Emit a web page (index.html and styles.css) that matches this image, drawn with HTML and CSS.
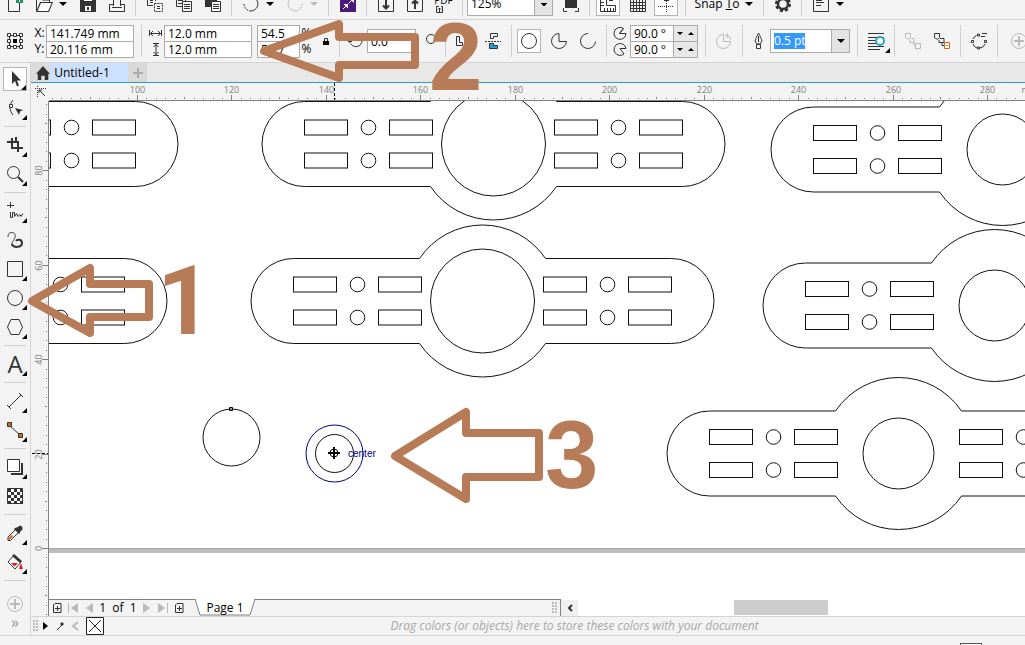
FILE: index.html
```
<!DOCTYPE html>
<html lang="en">
<head>
    <meta charset="UTF-8">
    <title>Untitled-1</title>
    <link rel="stylesheet" href="styles.css">
</head>
<body>
<!-- standard toolbar -->
<div class="toolbar standard">
    <button class="btn" aria-label="New"><svg class="icon" viewBox="0 0 16 16"><path d="M8 1.500H1.500V15.500H12.500V7"/><path class="green" d="M9 0h7v7H9z"/><path class="white-line" d="M12.500 1v5M10 3.500h5"/></svg></button>
    <button class="btn" aria-label="Open"><svg class="icon" viewBox="0 0 16 16"><path d="M.5 15V2h5l1 2h7v3"/><path class="solid" d="M4 6h13l-4 10H0z"/><path class="paper" d="M5 7h10.500l-3.300 8H1.500z"/></svg></button>
    <button class="caret" aria-label="Open recent"><svg viewBox="0 0 8 4"><path d="M0 0h8L4 4z"/></svg></button>
    <button class="btn" aria-label="Save"><svg class="icon" viewBox="0 0 16 16"><path class="solid" d="M0 0h16v16H0z"/><path class="paper" d="M4 0h8v5H4zM5 10h6v5H5z"/><path class="solid" d="M7 11h2v3H7z"/></svg></button>
    <button class="btn" aria-label="Print"><svg class="icon" viewBox="0 0 16 16"><path d="M4.500 10V1.500h7V10M4 8.500H.5v7h15v-7H12M3 11.500h10"/></svg></button>
    <span class="sep"></span>
    <button class="btn" aria-label="Cut"><svg class="icon" viewBox="0 0 16 16"><path d="M6 9.500H.5v-8h8V5M3 4.500h3M3 6.500h3"/><path stroke-dasharray="2 1" d="M7.500 7.500h8v8h-8z"/><path d="M10 10.500h3M10 12.500h3"/></svg></button>
    <button class="btn" aria-label="Copy"><svg class="icon" viewBox="0 0 16 16"><path d="M6 10.500H.5v-9h9V5M2 4.500h5M2 7.500h4"/><path d="M6.500 5.500h9v10h-9zM8 8.500h6M8 10.500h6M8 12.500h6"/></svg></button>
    <button class="btn" aria-label="Paste"><svg class="icon" viewBox="0 0 16 16"><path class="solid" d="M0 1h12v10H0z"/><path class="paper" d="M6 5h10v11H6z"/><path d="M6.500 5.500h9v10h-9zM8 8.500h6M8 10.500h6M8 12.500h6"/></svg></button>
    <span class="sep"></span>
    <button class="btn" aria-label="Undo"><svg class="icon" viewBox="0 0 16 16"><path stroke-dasharray="2 1" d="M1 8a7 7 0 0 0 7 7"/><path d="M8 15c9-1 9-13 1-13.500"/></svg></button>
    <button class="caret" aria-label="Undo list"><svg viewBox="0 0 8 4"><path d="M0 0h8L4 4z"/></svg></button>
    <button class="btn off" aria-label="Redo"><svg class="icon" viewBox="0 0 16 16"><path d="M8 15C-1 14-1 2 7 1.500"/><path stroke-dasharray="2 1" d="M15 8a7 7 0 0 1-7 7"/></svg></button>
    <button class="caret off" aria-label="Redo list"><svg viewBox="0 0 8 4"><path d="M0 0h8L4 4z"/></svg></button>
    <span class="sep"></span>
    <button class="btn" aria-label="Search content"><svg class="icon" viewBox="0 0 16 16"><path class="purple" d="M0 0h16v16H0z"/><path class="white-line" d="M3 13l4-4M4 8.500h3.500V12M8.500 7.500l5-5"/><path class="paper" d="M3.500 8H8v4.500zM9 2h5v5z"/></svg></button>
    <span class="sep"></span>
    <button class="btn" aria-label="Import"><svg class="icon" viewBox="0 0 16 16"><path d="M.5 1v14.500h15V1"/><path class="thick" d="M8 0v12M5 9.500l3 3 3-3"/></svg></button>
    <button class="btn" aria-label="Export"><svg class="icon" viewBox="0 0 16 16"><path d="M.5 1v14.500h15V1"/><path class="thick" d="M8 13V4M5 7.500l3-3 3 3"/></svg></button>
    <button class="btn pdf" aria-label="Publish to PDF"><span>PDF</span><svg class="icon" viewBox="0 0 16 7"><path d="M3 .5H.5v6h6V.5H5M3.500 6V2M2 3.500l1.500-1.500L5 3.500"/></svg></button>
    <span class="sep"></span>
    <select class="zoom" aria-label="Zoom level"><option>125%</option></select>
    <button class="btn" aria-label="Full-screen preview"><svg class="icon" viewBox="0 0 16 16"><path class="solid" d="M2 0h12v12H2z"/><path d="M.5 12v3.500H4M12 15.500h3.500V12"/></svg></button>
    <span class="sep"></span>
    <button class="btn on" aria-label="Show rulers"><svg class="icon" viewBox="0 0 16 16"><path d="M.5 0v15.500h15v-6h-9V0zM1 3.500h3M1 6.500h3M1 9.500h3M4.500 15v-3M7.500 15v-3M10.500 15v-3M13.500 15v-3M9 4.500h4"/></svg></button>
    <button class="btn" aria-label="Show grid"><svg class="icon" viewBox="0 0 16 16"><path d="M.5 3v12.500h15V3M3.500 3v12M6.500 3v12M9.500 3v12M12.500 3v12M1 3.500h14M1 6.500h14M1 9.500h14M1 12.500h14"/></svg></button>
    <button class="btn on" aria-label="Show guidelines"><svg class="icon" viewBox="0 0 16 16"><path stroke-dasharray="1 1" d="M8.500 5v11M0 10.500h16"/><path d="M6 4.500h5"/></svg></button>
    <span class="sep"></span>
    <button class="snap"><span>Snap <u>T</u>o</span></button>
    <button class="caret" aria-label="Snap options"><svg viewBox="0 0 8 4"><path d="M0 0h8L4 4z"/></svg></button>
    <span class="sep"></span>
    <button class="btn" aria-label="Options"><svg class="icon" viewBox="0 0 16 16"><circle class="gear" cx="8" cy="8" r="6.500"/><circle cx="8" cy="8" r="5" stroke-width="2.500"/></svg></button>
    <span class="sep"></span>
    <button class="btn" aria-label="Application launcher"><svg class="icon" viewBox="0 0 16 16"><path d="M.5.5h15v15H.5zM3 4.500h6M3 6.500h8M3 9.500h5"/></svg></button>
    <button class="caret" aria-label="Launcher list"><svg viewBox="0 0 8 4"><path d="M0 0h8L4 4z"/></svg></button>
</div>

<!-- property bar -->
<div class="toolbar props">
    <button class="origin" aria-label="Object origin"><svg class="icon" viewBox="0 0 16 16"><path d="M4 2.500h2M10 2.500h2M4 13.500h2M10 13.500h2M2.500 4v2M2.500 10v2M13.500 4v2M13.500 10v2"/><path d="M.5.5h3v3h-3zM6.500.5h3v3h-3zM12.500.5h3v3h-3zM.5 6.500h3v3h-3zM12.500 6.500h3v3h-3zM.5 12.500h3v3h-3zM6.500 12.500h3v3h-3zM12.500 12.500h3v3h-3z"/><path class="black" d="M6 6h4v4H6z"/></svg></button>
    <div class="fields pos">
        <label for="px">X:</label><input id="px" value="141.749 mm">
        <label for="py">Y:</label><input id="py" value="20.116 mm">
    </div>
    <span class="sep"></span>
    <div class="fields size">
        <label for="sw" aria-label="Width"><svg class="icon" viewBox="0 0 16 16"><path d="M2.500 5v6M14.500 5v6M3 8.500h11M6 6L3.500 8.500 6 11M11 6l2.500 2.500L11 11"/></svg></label><input id="sw" value="12.0 mm">
        <label for="sh" aria-label="Height"><svg class="icon" viewBox="0 0 16 16"><path d="M6 2.500h6M6 14.500h6M9 3v11M6.500 6L9 3.500 11.500 6M6.500 11L9 13.500l2.500-2.500"/></svg></label><input id="sh" value="12.0 mm">
    </div>
    <div class="fields scale">
        <input id="scx" value="54.5"><label for="scx">%</label>
        <input id="scy" value="53.7"><label for="scy">%</label>
    </div>
    <button class="lock" aria-label="Lock ratio"><svg class="icon" viewBox="0 0 16 16"><path class="black" d="M5 8h6v4H5z"/><path d="M6.500 8V5.500h3V8"/></svg></button>
    <span class="sep"></span>
    <div class="fields angle">
        <label for="rot" aria-label="Angle of rotation"><svg class="icon" viewBox="0 0 16 16"><path d="M4 11a6 6 0 1 0 3-9"/><path d="M1 8.500h4M3 6.500v4"/></svg></label><input id="rot" value="0.0">
    </div>
    <button class="turn" aria-label="Rotate"><svg class="icon" viewBox="0 0 16 16"><circle cx="9" cy="6" r="4.500"/></svg></button>
    <span class="sep"></span>
    <button class="btn" aria-label="Mirror horizontally"><svg class="icon" viewBox="0 0 16 16"><path d="M.5 3.500h3v6h3v3h-6z"/><path stroke-dasharray="2 1" d="M8.500 0v16"/><path class="blue" d="M13.500 3.500h3v9h-6v-3h3z"/></svg></button>
    <button class="btn" aria-label="Mirror vertically"><svg class="icon" viewBox="0 0 16 16"><path d="M12.500.5h-7v5h3v-2h4z"/><path stroke-dasharray="2 1" d="M0 8.500h16"/><path class="blue" d="M4.500 10.500h4v2h4v3h-8z"/></svg></button>
    <span class="sep"></span>
    <button class="btn on" aria-label="Ellipse"><svg class="icon" viewBox="0 0 16 16"><circle cx="8" cy="8" r="7.500"/></svg></button>
    <button class="btn" aria-label="Pie"><svg class="icon" viewBox="0 0 16 16"><path d="M8 .5A7.500 7.500 0 1 0 15.500 8.500H8z"/></svg></button>
    <button class="btn" aria-label="Arc"><svg class="icon" viewBox="0 0 16 16"><path d="M8 .5A7.500 7.500 0 1 0 15.500 8.500"/></svg></button>
    <span class="sep"></span>
    <div class="fields arc">
        <label for="a1" aria-label="Starting angle"><svg class="icon" viewBox="0 0 16 16"><path d="M11.500 3.500A6 6 0 1 0 14 8.500H7.500zM7.500 8.500l4-5"/></svg></label><input id="a1" value="90.0 °"><span class="spin"><button aria-label="Down"><svg viewBox="0 0 6 3"><path d="M0 0h6L3 3z"/></svg></button><button aria-label="Up"><svg viewBox="0 0 6 3"><path d="M0 3h6L3 0z"/></svg></button></span>
        <label for="a2" aria-label="Ending angle"><svg class="icon" viewBox="0 0 16 16"><path d="M14 7.500A6 6 0 1 0 12 13L8 7.500z"/></svg></label><input id="a2" value="90.0 °"><span class="spin"><button aria-label="Down"><svg viewBox="0 0 6 3"><path d="M0 0h6L3 3z"/></svg></button><button aria-label="Up"><svg viewBox="0 0 6 3"><path d="M0 3h6L3 0z"/></svg></button></span>
    </div>
    <span class="sep"></span>
    <button class="btn off" aria-label="Change direction"><svg class="icon" viewBox="0 0 16 16"><path d="M7.500 1.500A7 7 0 1 0 14.500 8.500h-7zM10 2.500c3 0 4 1 4.500 4M12 0l-2 2.500L12 5"/></svg></button>
    <span class="sep"></span>
    <label class="pen" for="outline" aria-label="Outline width"><svg class="icon" viewBox="0 0 16 16"><path d="M8.500 0C7 3 5.500 6 5 8l2 3h3l2-3c-.5-2-2-5-3.500-8zM8.500 3v6M6.500 11.500h4v4h-4z"/></svg></label>
    <div class="combo"><input id="outline" value="0.5 pt"><button aria-label="Outline widths"><svg viewBox="0 0 8 4"><path d="M0 0h8L4 4z"/></svg></button></div>
    <span class="sep"></span>
    <button class="btn fly" aria-label="Wrap text"><svg class="icon" viewBox="0 0 16 16"><path d="M0 .5h16M0 4.500h16M0 7.500h7M0 10.500h8M0 13.500h16M0 16.500h12"/><circle class="ring" cx="12" cy="8" r="4"/></svg></button>
    <span class="sep"></span>
    <button class="btn off" aria-label="To front"><svg class="icon" viewBox="0 0 16 16"><path d="M.5.5h5v4l-2 2-3-2zM6 5.500h3v4H5V7M10.500 10.500h5v5h-5zM9 9.500v3h1"/></svg></button>
    <button class="btn" aria-label="To back"><svg class="icon" viewBox="0 0 16 16"><path d="M.5.5h5v4l-2 2-3-2zM6 5.500h4v4H5V7M10 12.500H8V10"/><path class="orange" d="M10.500 9.500h5v6h-5z"/><path d="M12.500 12.500h1"/></svg></button>
    <span class="sep"></span>
    <button class="btn" aria-label="Convert to curves"><svg class="icon" viewBox="0 0 16 16"><path d="M5.500 2.500A6 6 0 0 0 2 6M2 11a6 6 0 0 0 4 4M9 15a6 6 0 0 0 5-4M6.500 1h2v2h-2zM.5 7.500h2v2h-2zM6.500 14h2v2h-2zM13.500 7.500h2v2h-2zM10 3.500h4M11 .5h5"/></svg></button>
    <span class="sep"></span>
    <button class="btn off add" aria-label="Customize"><svg class="icon" viewBox="0 0 16 16"><circle cx="8" cy="8" r="7.500"/><path class="thick" d="M8 3v10M3 8h10"/></svg></button>
</div>

<div class="main">
    <!-- toolbox -->
    <div class="toolbox">
        <button class="tool on fly" aria-label="Pick"><svg class="icon" viewBox="0 0 16 16"><path class="solid" d="M5 0v13l3-3 2 5.500 2-1-2-5h4z"/></svg></button>
        <button class="tool fly" aria-label="Shape"><svg class="icon" viewBox="0 0 16 16"><path d="M6 0C2 5 2 10 6 15"/><path class="sheet" d="M2.500 4.500h3v3h-3z"/><path class="solid" d="M8 8l8 2-3 1.500-1 3.500z"/></svg></button>
        <span class="rule"></span>
        <button class="tool fly" aria-label="Crop"><svg class="icon" viewBox="0 0 16 16"><path stroke-width="2" d="M0 5h11v10M5 1v10h11M9 0v5"/></svg></button>
        <button class="tool fly" aria-label="Zoom"><svg class="icon" viewBox="0 0 16 16"><circle cx="6.500" cy="6.500" r="6"/><path class="thick" d="M11 11l5 5"/></svg></button>
        <span class="rule"></span>
        <button class="tool fly" aria-label="Freehand"><svg class="icon" viewBox="0 0 16 16"><path d="M3.500-1v6M0 2.500h7M3.500 9v5.500h2v-5h2v4l2-3 1.500 3 2-2 1 2 2-3"/></svg></button>
        <button class="tool" aria-label="Artistic media"><svg class="icon" viewBox="0 0 16 16"><path d="M1 5C1 1 3 .500 5 .5s4 2 3 5-4 5-3 8"/><path stroke-width="2" d="M5 12c1 4 10 4 10-1 0-4-5-4-6-2"/></svg></button>
        <button class="tool fly" aria-label="Rectangle"><svg class="icon" viewBox="0 0 16 16"><path d="M.5.5h15v15H.5z"/></svg></button>
        <button class="tool fly" aria-label="Ellipse tool"><svg class="icon" viewBox="0 0 16 16"><circle cx="8" cy="8" r="7.500"/></svg></button>
        <button class="tool fly" aria-label="Polygon"><svg class="icon" viewBox="0 0 16 16"><path d="M4 .5h8L15.500 8 12 15.500H4L.5 8z"/></svg></button>
        <span class="rule"></span>
        <button class="tool fly letter" aria-label="Text">A</button>
        <span class="rule"></span>
        <button class="tool fly" aria-label="Parallel dimension"><svg class="icon" viewBox="0 0 16 16"><path d="M2 14L14 2M0 12l4 4M12 0l4 4"/></svg></button>
        <button class="tool fly" aria-label="Connector"><svg class="icon" viewBox="0 0 16 16"><path d="M3 4l10 9"/><path class="node" d="M.5.5h4v4h-4zM11.500 11.500h4v4h-4z"/></svg></button>
        <span class="rule"></span>
        <button class="tool fly" aria-label="Drop shadow"><svg class="icon" viewBox="0 0 16 16"><path stroke-width="2" d="M4 15h11V4"/><path class="sheet" d="M.5.5h12v12H.5z"/></svg></button>
        <button class="tool" aria-label="Transparency"><svg class="icon" viewBox="0 0 16 16"><path class="paper" d="M0 0h16v16H0z"/><path stroke-width="3" stroke-dasharray="3 3" d="M1 2.500h15M1 8.500h15M1 14.500h15"/><path stroke-width="3" stroke-dasharray="3 3" d="M4 5.500h12M4 11.500h12"/><path d="M.5.500h15v15H.5z"/></svg></button>
        <span class="rule"></span>
        <button class="tool fly" aria-label="Color eyedropper"><svg class="icon" viewBox="0 0 16 16"><path d="M9 4L1 12v3.500h2.500l8-8"/><path class="amber" d="M1.500 14.500l4-4"/><path class="solid" d="M11 2c2-3 6 0 4 3l-2 2 0 1-1 1-5-5 1-1z"/></svg></button>
        <button class="tool fly" aria-label="Interactive fill"><svg class="icon" viewBox="0 0 16 16"><path class="sheet" d="M7 1l7 7-6 7-7-7z"/><path class="solid" d="M7 0l8 7-2 2-8-7z"/><path class="red" d="M4 9h7l-3.500 3.500zM14 9l2 6h-4z"/></svg></button>
        <span class="rule"></span>
        <button class="tool off more" aria-label="Customize tools"><svg class="icon" viewBox="0 0 16 16"><circle cx="8" cy="8" r="7.500"/><path class="thick" d="M8 3v10M3 8h10"/></svg></button>
        <button class="expand" aria-label="Expand">»</button>
    </div>

    <div class="work">
        <div class="tabs">
            <button class="home" aria-label="Welcome screen"><svg viewBox="0 0 16 16"><path d="M8 0l8 9h-2v7h-4v-5H6v5H2V9H0z"/></svg></button>
            <button class="tab">Untitled-1</button>
            <button class="tab-add" aria-label="New document"><svg viewBox="0 0 12 12"><path d="M6 1v10M1 6h10"/></svg></button>
        </div>

        <div class="desk">
            <div class="corner"><svg class="icon" viewBox="0 0 16 16"><path stroke-dasharray="1 1" d="M3 4.500h11M5.500 2v11"/><path d="M13 12L7 6M7 9V6h3"/></svg></div>
            <svg class="ruler-x" id="rulerX"></svg>
            <svg class="ruler-y" id="rulerY"></svg>
            <svg class="canvas">
                <defs>
                    <g id="wing">
                        <rect x="-189" y="-24" width="43" height="15"/>
                        <rect x="-104" y="-24" width="43" height="15"/>
                        <rect x="-189" y="9" width="43" height="15"/>
                        <rect x="-104" y="9" width="43" height="15"/>
                        <circle cx="-125" cy="-16.500" r="7.300"/>
                        <circle cx="-125" cy="16.500" r="7.300"/>
                    </g>
                    <g id="plate">
                        <path d="M-63-42.500H-189a42.500 42.500 0 0 0 0 85H-63A76 76 0 0 0 63 42.500H189a42.500 42.500 0 0 0 0-85H63A76 76 0 0 0-63-42.500z"/>
                        <use href="#wing"/>
                        <use href="#wing" transform="scale(-1 1)"/>
                    </g>
                </defs>
                <path class="page-edge" d="M0 449.500h3000"/>
                <path class="page-line" d="M0 447.500h3000"/>
                <g class="parts">
                    <use href="#plate" x="-102.500" y="43"/>
                    <use href="#plate" x="-113.500" y="200"/>
                    <use href="#plate" x="444.500" y="43"/>
                    <circle cx="444.500" cy="43" r="52"/>
                    <use href="#plate" x="433.500" y="200"/>
                    <circle cx="433.500" cy="200" r="52"/>
                    <use href="#plate" x="953.500" y="48.500"/>
                    <circle cx="953.500" cy="48.500" r="35.500"/>
                    <use href="#plate" x="945.500" y="204.500"/>
                    <circle cx="945.500" cy="204.500" r="35.500"/>
                    <use href="#plate" x="849.500" y="352.500"/>
                    <circle cx="849.500" cy="352.500" r="35.500"/>
                    <circle cx="182.500" cy="336.500" r="28.500"/>
                    <path class="node-mark" d="M180.500 306.500h3v3h-3z"/>
                    <circle cx="285.500" cy="352.500" r="19"/>
                    <circle class="hover" cx="285.500" cy="352.500" r="28.500"/>
                    <path class="cross" d="M285 346v12M279 352h12"/>
                    <circle cx="285" cy="352" r="4"/>
                </g>
                <text class="hint" x="299" y="356">center</text>
            </svg>
            <div class="nav">
                <div class="pages">
                    <button aria-label="Add page before"><svg class="icon" viewBox="0 0 16 16"><path d="M6 3.500h6v9H4.500V5zM8.500 6v5M6 8.500h5"/></svg></button>
                    <button class="off" aria-label="First page"><svg class="icon" viewBox="0 0 16 16"><path d="M3.500 3v10"/><path class="solid" d="M13 3v10L6 8z"/></svg></button>
                    <button class="off" aria-label="Previous page"><svg class="icon" viewBox="0 0 16 16"><path class="solid" d="M12 3v10L5 8z"/></svg></button>
                    <span class="count">1&nbsp; of &nbsp;1</span>
                    <button class="off" aria-label="Next page"><svg class="icon" viewBox="0 0 16 16"><path class="solid" d="M4 3v10l7-5z"/></svg></button>
                    <button class="off" aria-label="Last page"><svg class="icon" viewBox="0 0 16 16"><path class="solid" d="M3 3v10l7-5z"/><path d="M12.500 3v10"/></svg></button>
                    <button aria-label="Add page after"><svg class="icon" viewBox="0 0 16 16"><path d="M6 3.500h6v9H4.500V5zM8.500 6v5M6 8.500h5"/></svg></button>
                    <button class="page-tab"><svg viewBox="0 0 60 17"><path d="M0 0l5 16h50L60 0"/></svg><span>Page 1</span></button>
                    <span class="grip"></span>
                </div>
                <button class="scroll-left" aria-label="Scroll left"><svg class="icon" viewBox="0 0 16 16"><path stroke-width="2" d="M10 5L7 8l3 3"/></svg></button>
                <div class="track"><div class="thumb"></div></div>
            </div>
        </div>

        <div class="palette">
            <span class="grip"></span>
            <button aria-label="Palette menu"><svg class="icon" viewBox="0 0 16 16"><path class="black" d="M5 4v8l5-4z"/></svg></button>
            <button aria-label="Pick color"><svg class="icon" viewBox="0 0 16 16"><path d="M3 12l5-5"/><path stroke-width="3" d="M7 7l2-2"/></svg></button>
            <button class="off" aria-label="Scroll palette"><svg class="icon" viewBox="0 0 16 16"><path stroke-width="2" d="M8 4L3 8l5 4"/></svg></button>
            <button class="none" aria-label="No color"><svg viewBox="0 0 18 18"><path d="M.5.5h17v17H.5zM3 3l12 12M15 3L3 15"/></svg></button>
            <span class="drag">Drag colors (or objects) here to store these colors with your document</span>
        </div>
    </div>
</div>
<div class="status"><span class="swatch"></span></div>

<!-- numbered arrows lying over the window -->
<svg class="notes">
    <path d="M32 301L90 268V284H149V317H90V333Z"/>
    <path d="M264 51L339 24V37H415V65H339V78Z"/>
    <path d="M395 456L466 412V433H539V477H466V499Z"/>
    <text class="one" x="157" y="334">1</text>
    <text x="429" y="90">2</text>
    <text x="545" y="488">3</text>
</svg>
<script src="script.js"></script>
</body>
</html>
```
FILE: styles.css
```
*{
    margin: 0;
    padding: 0;
    box-sizing: border-box;
}
body{
    height: 100vh;
    display: flex;
    flex-direction: column;
    overflow: hidden;
    background: #f3f3f3;
    color: #000;
    font: 12px/16px "Open Sans", "Noto Sans", sans-serif;
}
button, input, select{
    font: inherit;
    color: inherit;
    border: 0;
    border-radius: 0;
    background: none;
    outline: none;
}
button{
    display: flex;
    align-items: center;
    justify-content: center;
    flex-shrink: 0;
}
svg{
    display: block;
}

/* icons */
.icon{
    width: 16px;
    height: 16px;
    flex-shrink: 0;
    fill: none;
    stroke: #333;
    overflow: visible;
}
.icon .thick{
    stroke-width: 2;
}
.icon .solid{
    fill: #333;
    stroke: none;
}
.icon .black{
    fill: #000;
    stroke: none;
}
.icon .paper{
    fill: #fff;
    stroke: none;
}
.icon .sheet{
    fill: #fff;
}
.icon .green{
    fill: #1e9650;
    stroke: none;
}
.icon .purple{
    fill: #4b1a78;
    stroke: none;
}
.icon .red{
    fill: #e01b1b;
    stroke: none;
}
.icon .blue{
    fill: #2aa0d8;
}
.icon .white-line{
    stroke: #fff;
}
.icon .ring{
    fill: #fff;
    stroke: #2aa0d8;
    stroke-width: 2;
}
.icon .orange{
    stroke: #d9651a;
}
.icon .amber{
    stroke: #d9651a;
    stroke-width: 2;
}
.icon .node{
    fill: #d9651a;
}
.icon .gear{
    stroke-width: 3;
    stroke-dasharray: 3 2;
}
.off .icon{
    stroke: #b9b9b9;
}
.off .icon .solid{
    fill: #b9b9b9;
}

/* toolbars */
.toolbar{
    display: flex;
    flex-shrink: 0;
    overflow: hidden;
    border-bottom: 1px solid #d4d4d4;
}
.standard{
    height: 20px;
    align-items: flex-end;
    padding-bottom: 3px;
}
.props{
    height: 43px;
    align-items: center;
}
.btn{
    width: 29px;
    height: 24px;
    position: relative;
}
.btn.on{
    width: 24px;
    margin: 0 3px 0 2px;
    background: #fff;
    border: 1px solid #b4b4b4;
}
.caret{
    width: 15px;
    height: 24px;
    padding-right: 5px;
}
.caret svg, .combo svg{
    width: 8px;
    height: 4px;
}
.caret.off{
    fill: #b9b9b9;
}
.sep{
    width: 1px;
    height: 32px;
    margin: 0 4px;
    flex-shrink: 0;
    background: #d0d0d0;
}
.standard .sep{
    height: 24px;
}
.props .sep{
    margin-right: 3px;
}
.pdf{
    flex-direction: column;
    font-size: 10px;
    line-height: 12px;
}
.pdf .icon{
    height: 7px;
    margin-bottom: 1px;
}
.zoom{
    width: 86px;
    height: 24px;
    padding-left: 3px;
    margin-right: 3px;
    flex-shrink: 0;
    appearance: none;
    border: 1px solid #ababab;
    background-color: #fff;
    background-image: linear-gradient(to bottom right, #000 50%, transparent 50%), linear-gradient(to bottom left, #000 50%, transparent 50%), linear-gradient(#ababab, #ababab), linear-gradient(#e3e3e3, #e3e3e3);
    background-size: 4px 4px, 4px 4px, 1px 100%, 17px 100%;
    background-position: right 4px top 10px, right 8px top 10px, right 17px top, right top;
    background-repeat: no-repeat;
}
.snap{
    width: 54px;
    height: 24px;
    white-space: nowrap;
}

/* property bar fields */
.fields{
    display: grid;
    grid-auto-rows: 16px;
    flex-shrink: 0;
    margin-right: 3px;
}
.fields input{
    width: 100%;
    height: 17px;
    padding-left: 3px;
    border: 1px solid #ababab;
    background: #fff;
}
.fields label{
    display: flex;
    align-items: center;
    justify-content: center;
}
.origin{
    width: 30px;
    height: 24px;
    margin-right: 3px;
}
.pos{
    grid-template-columns: 13px 88px;
}
.size{
    grid-template-columns: 19px 88px;
}
.scale{
    grid-template-columns: 43px 13px;
    margin-left: 2px;
}
.lock{
    width: 19px;
}
.angle{
    grid-template-columns: 24px 49px;
    grid-auto-rows: 24px;
}
.angle input{
    height: 24px;
}
.turn{
    width: 22px;
}
.arc{
    grid-template-columns: 20px 44px 24px;
}
.spin{
    display: flex;
    height: 17px;
    border: 1px solid #ababab;
    border-left: 0;
    background: #e8e8e8;
}
.spin button{
    flex: 1;
}
.spin svg{
    width: 6px;
    height: 3px;
}
.pen{
    width: 24px;
    flex-shrink: 0;
    display: flex;
    justify-content: center;
}
.combo{
    display: flex;
    align-items: center;
    width: 80px;
    height: 24px;
    padding-left: 3px;
    margin-right: 3px;
    flex-shrink: 0;
    border: 1px solid #ababab;
    background: #fff;
}
.combo input{
    width: 31px;
    height: 16px;
    background: #3399ff;
    color: #fff;
}
.combo button{
    width: 18px;
    height: 22px;
    margin-left: auto;
    border-left: 1px solid #ababab;
    background: #e3e3e3;
}
.add{
    margin-left: 3px;
}

/* toolbox */
.main{
    flex: 1;
    min-height: 0;
    display: flex;
}
.toolbox{
    width: 31px;
    flex-shrink: 0;
    padding-top: 4px;
    display: flex;
    flex-direction: column;
    align-items: center;
    border-right: 1px solid #d4d4d4;
    border-bottom: 1px solid #d4d4d4;
}
.tool{
    width: 24px;
    height: 24px;
    margin-bottom: 5px;
    position: relative;
}
.tool.on{
    background: #fff;
    border: 1px solid #b4b4b4;
}
.fly::after{
    content: "";
    position: absolute;
    right: 0;
    bottom: 0;
    width: 5px;
    height: 5px;
    background: #000;
    clip-path: polygon(100% 0, 100% 100%, 0 100%);
}
.rule{
    width: 22px;
    height: 1px;
    margin: 1px 0 6px;
    background: #d0d0d0;
    flex-shrink: 0;
}
.letter{
    font-size: 24px;
    color: #333;
}
.more{
    margin-top: 5px;
    margin-bottom: 0;
}
.expand{
    color: #999;
    font-size: 16px;
    height: 12px;
}

/* document tabs */
.work{
    flex: 1;
    min-width: 0;
    display: flex;
    flex-direction: column;
}
.tabs{
    display: flex;
    height: 20px;
    flex-shrink: 0;
    background: #e8e8e8;
    border-bottom: 1px solid #2f9ccb;
}
.home{
    width: 19px;
    background: #dcdcdc;
    padding-left: 4px;
}
.home svg{
    width: 14px;
    height: 14px;
    fill: #333;
}
.tab{
    width: 78px;
    background: #cce0ff;
    padding-right: 14px;
    white-space: nowrap;
}
.tab-add{
    width: 19px;
    background: #d9d9d9;
}
.tab-add svg{
    width: 12px;
    height: 12px;
    stroke: #aaa;
    stroke-width: 2;
}

/* rulers and drawing area */
.desk{
    flex: 1;
    min-height: 0;
    display: grid;
    grid-template-columns: 18px minmax(0, 1fr);
    grid-template-rows: 18px minmax(0, 1fr) 17px;
}
.corner{
    display: flex;
    align-items: center;
    justify-content: center;
}
.ruler-x{
    width: 100%;
    height: 18px;
    border-bottom: 1px solid #808080;
}
.ruler-y{
    width: 18px;
    height: 100%;
    grid-row: 2 / 4;
    border-right: 1px solid #808080;
}
.ruler-x text, .ruler-y text{
    font-size: 9px;
    fill: #808080;
    text-anchor: middle;
}
.ruler-x path, .ruler-y path{
    stroke: #808080;
    shape-rendering: crispEdges;
}
.ruler-x .cursor, .ruler-y .cursor{
    stroke: #000;
    stroke-dasharray: 3 2;
}
.canvas{
    width: 100%;
    height: 100%;
    background: #fff;
}
.parts{
    fill: none;
    stroke: #111;
}
.parts .hover{
    stroke: #00008b;
}
.parts .node-mark{
    stroke: #000;
}
.parts .cross{
    stroke: #000;
    stroke-width: 2;
}
.page-edge{
    stroke: #bdbdbd;
    stroke-width: 5;
}
.page-line{
    stroke: #a6a6a6;
}
.hint{
    font: 10px "Liberation Sans", sans-serif;
    fill: #00008b;
}

/* page navigator */
.nav{
    display: flex;
    background: #fff;
}
.pages{
    width: 512px;
    flex-shrink: 0;
    display: flex;
    align-items: center;
    background: #f3f3f3;
    border-top: 1px solid #808080;
    border-right: 1px solid #808080;
}
.pages button{
    width: 16px;
    height: 16px;
}
.count{
    width: 42px;
    text-align: center;
    white-space: nowrap;
}
.pages .page-tab{
    display: grid;
    width: 60px;
    height: 17px;
    margin: -1px 0 0 8px;
}
.page-tab svg, .page-tab span{
    grid-area: 1 / 1;
}
.page-tab svg{
    width: 60px;
    height: 17px;
    fill: #fff;
    stroke: #808080;
}
.grip{
    width: 5px;
    height: 12px;
    background: radial-gradient(circle at 1px 1px, #bbb 1px, transparent 1px) 0 0 / 3px 3px;
}
.pages .grip{
    margin-left: auto;
    margin-right: 3px;
}
.scroll-left{
    width: 17px;
    height: 16px;
    margin-top: 1px;
    background: #f0f0f0;
}
.track{
    flex: 1;
    padding-top: 1px;
}
.thumb{
    width: 21%;
    height: 15px;
    margin-left: 35%;
    background: #cdcdcd;
}

/* document palette */
.palette{
    height: 20px;
    flex-shrink: 0;
    display: flex;
    align-items: center;
    padding-left: 2px;
    border-top: 1px solid #d4d4d4;
    border-bottom: 1px solid #d4d4d4;
}
.palette button{
    width: 16px;
    height: 18px;
}
.palette .none{
    width: 18px;
}
.none svg{
    width: 18px;
    height: 18px;
    fill: #fff;
    stroke: #222;
}
.drag{
    flex: 1;
    padding-left: 20px;
    text-align: center;
    font-style: italic;
    color: #a8a8a8;
    white-space: nowrap;
}
.status{
    height: 9px;
    flex-shrink: 0;
    display: flex;
    justify-content: flex-end;
    align-items: flex-end;
    padding-right: 43px;
}
.swatch{
    width: 22px;
    height: 2px;
    background: #fff;
    border: 1px solid #555;
    border-bottom: 0;
}

.notes{
    position: absolute;
    left: 0;
    top: 0;
    width: 100%;
    height: 100%;
    pointer-events: none;
}
.notes path{
    fill: none;
    stroke: #b87b57;
    stroke-width: 8;
    stroke-linejoin: round;
}
.notes text{
    font: bold 96px "Liberation Sans", sans-serif;
    fill: #b87b57;
}
.notes .one{
    font-family: Roboto, sans-serif;
}
```
FILE: script.js
```
// pixels per millimetre at the current zoom
let scale = 4.722;
let rulerX = document.querySelector("#rulerX");
let rulerY = document.querySelector("#rulerY");
let tickX = "";
let tickY = "";
let textX = "";
let textY = "";

// horizontal ruler, 100 mm stands at 88px
for (let mm = 82; mm <= 600; mm += 2) {
    let x = Math.round(88 + (mm - 100) * scale) + 0.5;
    let len = mm % 20 === 0 ? 5 : mm % 10 === 0 ? 2 : 1;
    let end = mm % 20 === 0 ? 17 : 16;
    tickX += `M${x} ${end - len}V${end}`;
    if (mm % 20 === 0) {
        textX += `<text x="${x}" y="10">${mm}</text>`;
    }
}
textX += '<text x="996" y="10">millimeters</text>';
rulerX.innerHTML = `<path d="${tickX}"/>${textX}<path class="cursor" d="M285.5 0V17"/>`;

// vertical ruler, 0 mm stands at 447px
for (let mm = -200; mm <= 94; mm += 2) {
    let y = Math.round(447 - mm * scale) + 0.5;
    let len = mm % 20 === 0 ? 6 : mm % 10 === 0 ? 2 : 1;
    let end = mm % 20 === 0 ? 17 : 16;
    tickY += `M${end - len} ${y}H${end}`;
    if (mm % 20 === 0 && mm >= 0) {
        textY += `<text x="11" y="${y}" transform="rotate(-90 11 ${y})">${mm}</text>`;
    }
}
rulerY.innerHTML = `<path d="${tickY}"/>${textY}<path class="cursor" d="M1 352.5H17"/>`;
```
